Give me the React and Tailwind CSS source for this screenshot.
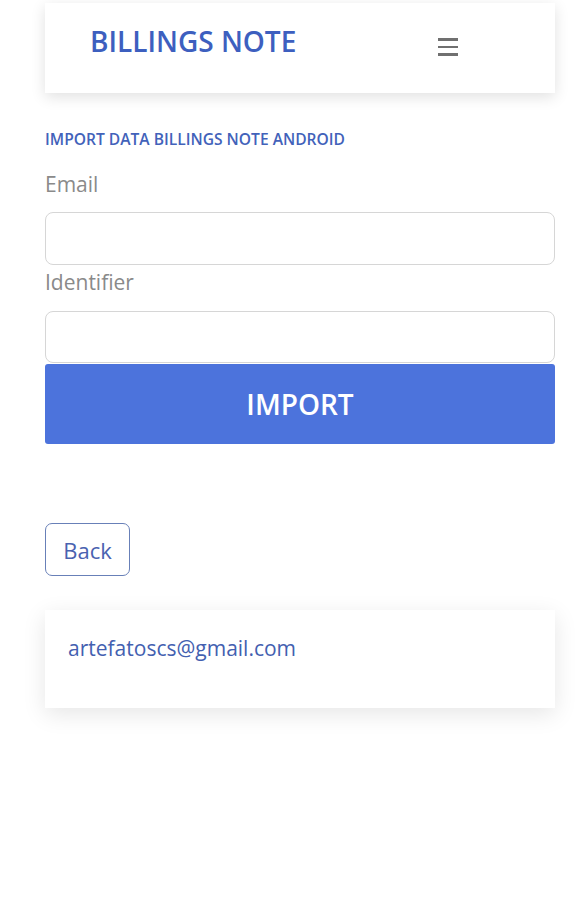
import { useState } from "react";

const font = { fontFamily: "'Open Sans', Lato, sans-serif" };

const App = () => {
  const [email, setEmail] = useState("");
  const [identifier, setIdentifier] = useState("");

  return (
    <div className="min-h-[900px] bg-white pl-[45px] pr-[22px] pt-[3px]" style={font}>
      <nav className="bg-white shadow-[0_4px_14px_rgba(0,0,0,0.12)] h-[90px] flex items-start justify-between pl-[45px] pr-[97px] pt-[20px]">
        <span className="text-[28px] font-semibold text-[#3d5fbf] leading-[36px]">BILLINGS NOTE</span>
        <button className="mt-[15px] flex flex-col gap-[5px]">
          <span className="block w-[20px] h-[2.5px] bg-[#707070]" />
          <span className="block w-[20px] h-[2.5px] bg-[#707070]" />
          <span className="block w-[20px] h-[2.5px] bg-[#707070]" />
        </button>
      </nav>

      <div className="mt-[36px] text-[15.6px] font-semibold text-[#4262ba] leading-[20px]">
        IMPORT DATA BILLINGS NOTE ANDROID
      </div>

      <label className="block mt-[21px] text-[21px] text-[#8a8a8a] leading-[28px]">Email</label>
      <input
        value={email}
        onChange={(e) => setEmail(e.target.value)}
        className="block w-full mt-[14px] h-[53px] rounded-[8px] border border-[#d6d6d6] outline-none px-3"
      />
      <label className="block mt-[3px] text-[21px] text-[#8a8a8a] leading-[28px]">Identifier</label>
      <input
        value={identifier}
        onChange={(e) => setIdentifier(e.target.value)}
        className="block w-full mt-[15px] h-[52px] rounded-[8px] border border-[#d6d6d6] outline-none px-3"
      />
      <button className="block w-full mt-[1px] h-[80px] rounded-[3px] bg-[#4c73dc] text-white text-[28px] font-semibold">
        IMPORT
      </button>

      <button className="mt-[79px] w-[85px] h-[53px] rounded-[7px] border border-[#6880b8] text-[#4a62b0] text-[22px] leading-[28px]">
        Back
      </button>

      <div className="mt-[34px] bg-white shadow-[0_6px_22px_rgba(0,0,0,0.10)] h-[98px] px-[23px] pt-[24px]">
        <span className="block text-[21px] text-[#4360b0] leading-[28px]">artefatoscs@gmail.com</span>
      </div>
    </div>
  );
};

export default App;
